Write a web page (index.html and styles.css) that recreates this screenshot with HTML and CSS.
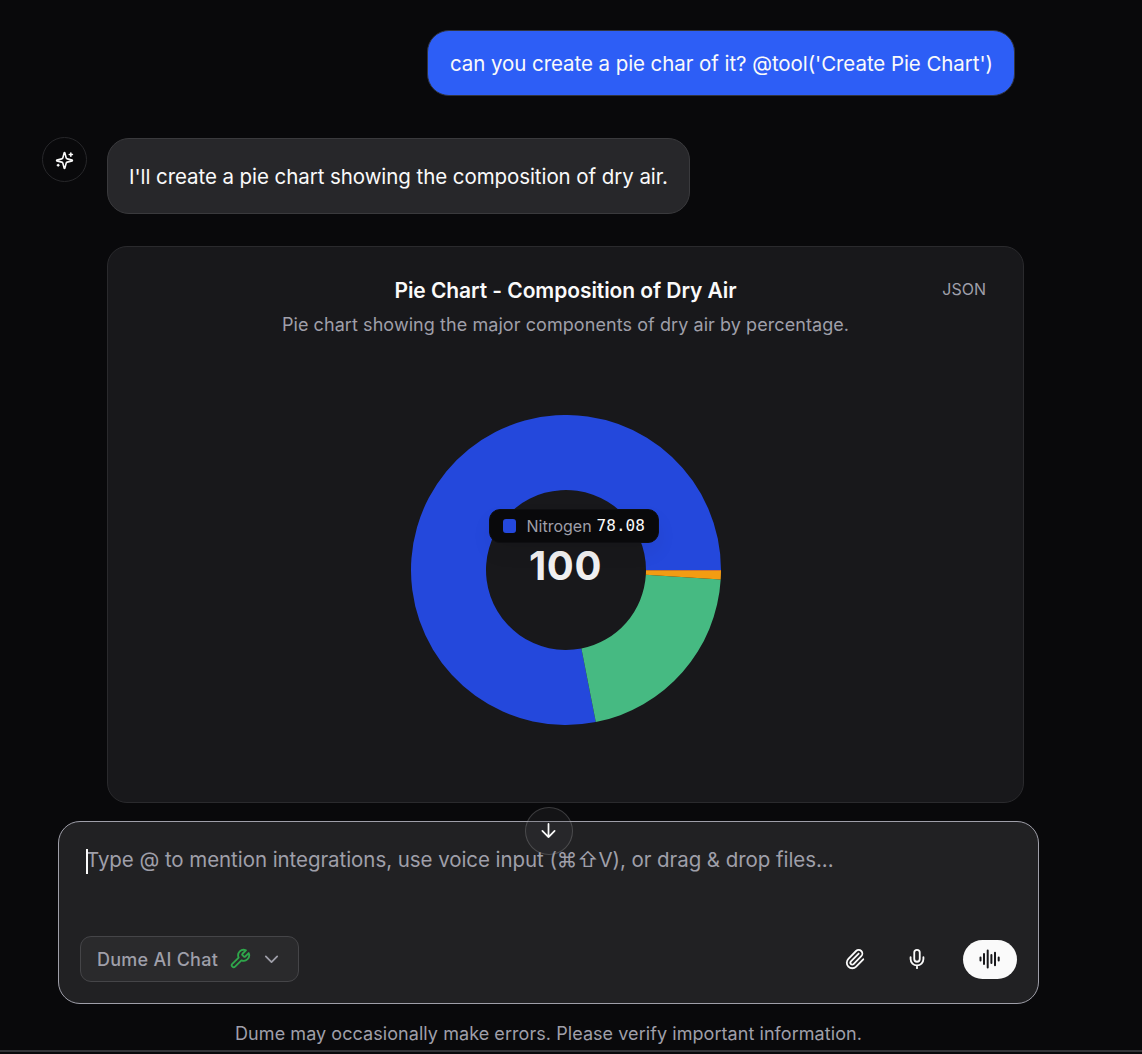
FILE: index.html
```html
<!DOCTYPE html>
<html lang="en">
	<head>
		<meta charset="UTF-8">
		<title>Dume AI Chat</title>
		<link rel="stylesheet" href="styles.css">
	</head>
	<body>
		<div id="app">
			<main class="messages">
				<div class="row user">
					<div class="bubble"><span>can you create a pie char of it? @tool('Create Pie Chart')</span></div>
				</div>
				<div class="row assistant">
					<div class="avatar">
						<svg class="icon" width="19" height="19" viewBox="0 0 24 24">
							<path d="M9.94 15.5A2 2 0 0 0 8.5 14.06L2.37 12.48a.5.5 0 0 1 0-.96L8.5 9.94A2 2 0 0 0 9.94 8.5l1.58-6.13a.5.5 0 0 1 .96 0L14.06 8.5a2 2 0 0 0 1.44 1.44l6.13 1.58a.5.5 0 0 1 0 .96l-6.13 1.58a2 2 0 0 0-1.44 1.44l-1.58 6.13a.5.5 0 0 1-.96 0z"/>
							<path d="M20 2.500v4M22 4.500h-4M4 17v2M5 18H3"/>
						</svg>
					</div>
					<div class="content">
						<div class="bubble"><span>I'll create a pie chart showing the composition of dry air.</span></div>
						<section class="card">
							<button class="json">JSON</button>
							<h2>Pie Chart - Composition of Dry Air</h2>
							<p>Pie chart showing the major components of dry air by percentage.</p>
							<div class="chart">
								<svg width="310" height="310" viewBox="-155 -155 310 310">
									<path fill="#2448dc" d="M155 0A155 155 0 1 0 29.8 152.1L15.400 78.500A80 80 0 1 1 80 0z"/>
									<path fill="#46ba82" d="M29.800 152.100A155 155 0 0 0 154.700 9.400L79.850 4.870A80 80 0 0 1 15.400 78.500z"/>
									<path fill="#f39c12" d="M154.700 9.400A155 155 0 0 0 155 .3L80 .2A80 80 0 0 1 79.850 4.870z"/>
									<path fill="#e8705a" d="M155 .4V0H80V.2z"/>
								</svg>
								<strong class="total">100</strong>
								<div class="tooltip">
									<i></i>
									<span>Nitrogen</span>
									<b>78.08</b>
								</div>
							</div>
						</section>
					</div>
				</div>
			</main>
			<div class="composer">
				<div class="input"><span>Type @ to mention integrations, use voice input (⌘⇧V), or drag &amp; drop files...</span></div>
				<button class="scroll-down">
					<svg class="icon" width="21" height="21" viewBox="0 0 24 24"><path d="M12 4.500v15M19 12.500l-7 7-7-7"/></svg>
				</button>
				<div class="toolbar">
					<button class="mode">
						<span>Dume AI Chat</span>
						<svg class="icon wrench" width="22" height="22" viewBox="0 0 24 24"><path d="M14.700 6.300a1 1 0 0 0 0 1.400l1.600 1.600a1 1 0 0 0 1.400 0l3.770-3.770a6 6 0 0 1-7.940 7.940l-6.910 6.910a2.120 2.120 0 0 1-3-3l6.910-6.910a6 6 0 0 1 7.940-7.940l-3.760 3.760z"/></svg>
						<svg class="icon" width="21" height="21" viewBox="0 0 24 24"><path d="M5.500 8.500l6.500 6.500 6.500-6.500"/></svg>
					</button>
					<div class="actions">
						<svg class="icon" width="22" height="22" viewBox="0 0 24 24"><path d="M13.230 20.250L21 12.300M16 6.090L7.590 14.700a2 2 0 0 0 2.830 2.830l8.410-8.620a4 4 0 1 0-5.660-5.660l-8.380 8.550a6 6 0 1 0 8.490 8.490"/></svg>
						<svg class="icon" width="22" height="22" viewBox="0 0 24 24"><rect x="9" y="2" width="6" height="13" rx="3"/><path d="M12 19v3M19 10v2a7 7 0 0 1-14 0v-2"/></svg>
						<button class="voice">
							<svg class="icon" width="22" height="22" viewBox="0 0 22 22"><path d="M1.500 9.500v3M5 6v10M8.700 2.500v17M12.400 7v8M16 4.700v12.600M19.700 9.500v3"/></svg>
						</button>
					</div>
				</div>
			</div>
			<footer><span>Dume may occasionally make errors. Please verify important information.</span></footer>
		</div>
	</body>
</html>
```

FILE: styles.css
```css
* {
	box-sizing: border-box;
}
body {
	margin: 0;
	background: #09090b;
	color: #fafafa;
	font-family: Inter, "Liberation Sans", sans-serif;
}
button {
	padding: 0;
	border: 0;
	background: none;
	color: inherit;
	font: inherit;
}
.icon {
	display: block;
	fill: none;
	stroke: currentColor;
	stroke-width: 2;
	stroke-linecap: round;
	stroke-linejoin: round;
}
#app {
	display: flex;
	flex-direction: column;
	height: 1052px;
	border-bottom: 2px solid #343438;
	overflow: hidden;
}
.messages {
	padding: 30px 118px 0 42px;
}
.row {
	display: flex;
}
.bubble {
	display: flex;
	align-items: center;
	width: fit-content;
	border: 1px solid #3a3a3d;
	border-radius: 22px;
	font-size: 20.5px;
	letter-spacing: -.07px;
	white-space: nowrap;
}
.user {
	justify-content: flex-end;
	padding-right: 9px;
}
.user .bubble {
	width: 588px;
	height: 66px;
	padding: 0 22px;
	border-color: #30343f;
	background: #2d5ef6;
}
.assistant {
	gap: 20px;
	margin-top: 41px;
}
.avatar {
	display: flex;
	align-items: center;
	justify-content: center;
	width: 45px;
	height: 45px;
	padding-top: 2px;
	border: 1px solid #27272a;
	border-radius: 50%;
}
.content {
	flex: 1;
	padding-top: 1px;
}
.content .bubble {
	width: 583px;
	height: 76px;
	padding: 0 21px;
	background: #27272a;
}
.card {
	position: relative;
	height: 557px;
	margin-top: 32px;
	padding-top: 30px;
	border: 1px solid #2a2a2d;
	border-radius: 20px;
	background: #18181b;
	text-align: center;
}
.card h2 {
	margin: 0;
	font-size: 21px;
	font-weight: 600;
	letter-spacing: -.07px;
	line-height: 28px;
}
.card p {
	margin: 7px 0 0;
	color: #9f9fa9;
	font-size: 18px;
	letter-spacing: .07px;
	line-height: 26px;
}
.json {
	position: absolute;
	top: 32px;
	right: 37px;
	color: #9f9fa9;
	font-size: 16px;
	line-height: 20px;
}
.chart {
	position: relative;
	width: 310px;
	height: 310px;
	margin: 77px auto 0;
}
.chart svg {
	display: block;
}
.total {
	position: absolute;
	top: 126px;
	left: 0;
	width: 100%;
	color: #f0f0f1;
	font-size: 40px;
	font-weight: 700;
	letter-spacing: .6px;
	line-height: 50px;
}
.tooltip {
	position: absolute;
	top: 94px;
	left: 78px;
	display: flex;
	align-items: center;
	width: 170px;
	height: 34px;
	padding-left: 13px;
	border: 1px solid #0e0e11;
	border-radius: 11px;
	background: #09090b;
	box-shadow: 0 10px 20px rgba(0, 0, 0, .06);
	font-size: 16px;
}
.tooltip i {
	width: 13px;
	height: 14px;
	margin-right: 11px;
	border-radius: 3px;
	background: #2448dc;
}
.tooltip span {
	color: #9f9fa9;
}
.tooltip b {
	margin: -2px 0 0 5px;
	font-family: "DejaVu Sans Mono", monospace;
	font-weight: 400;
}
.composer {
	position: relative;
	flex: none;
	width: 981px;
	height: 183px;
	margin: 18px 0 0 58px;
	padding: 24px 21px 21px;
	border: 1px solid #9f9fa9;
	border-radius: 22px;
	background: #212123;
}
.input {
	width: fit-content;
	height: 30px;
	margin-left: 6px;
	color: #9f9fa9;
	font-size: 20.5px;
	letter-spacing: -.06px;
	line-height: 28px;
	white-space: nowrap;
}
.input::before {
	content: "";
	position: absolute;
	top: 27px;
	left: 27px;
	width: 2px;
	height: 25px;
	background: #fafafa;
}
.scroll-down {
	position: absolute;
	top: -15px;
	left: 466px;
	display: flex;
	align-items: center;
	justify-content: center;
	width: 48px;
	height: 48px;
	padding: 0 2px 2px 0;
	border: 1px solid rgba(255, 255, 255, .17);
	border-radius: 50%;
	background: rgba(63, 63, 70, .2);
}
.toolbar {
	display: flex;
	align-items: center;
	justify-content: space-between;
	margin-top: 60px;
}
.mode {
	display: flex;
	align-items: center;
	width: 219px;
	height: 46px;
	padding-left: 16px;
	border: 1px solid #454548;
	border-radius: 11px;
	background: #2a2a2c;
	color: #9f9fa9;
	font-size: 18px;
	font-weight: 500;
	letter-spacing: .25px;
}
.mode .wrench {
	margin: 0 10px 0 11px;
	color: #2fa74b;
}
.actions {
	display: flex;
	align-items: center;
	gap: 40px;
}
.voice {
	display: flex;
	align-items: center;
	justify-content: center;
	width: 54px;
	height: 39px;
	margin-left: -5px;
	border-radius: 20px;
	background: #fafafa;
	color: #18181b;
}
footer {
	margin-top: 18px;
	padding-right: 45px;
	color: #9f9fa9;
	font-size: 18px;
	letter-spacing: .06px;
	line-height: 24px;
	text-align: center;
}
```
